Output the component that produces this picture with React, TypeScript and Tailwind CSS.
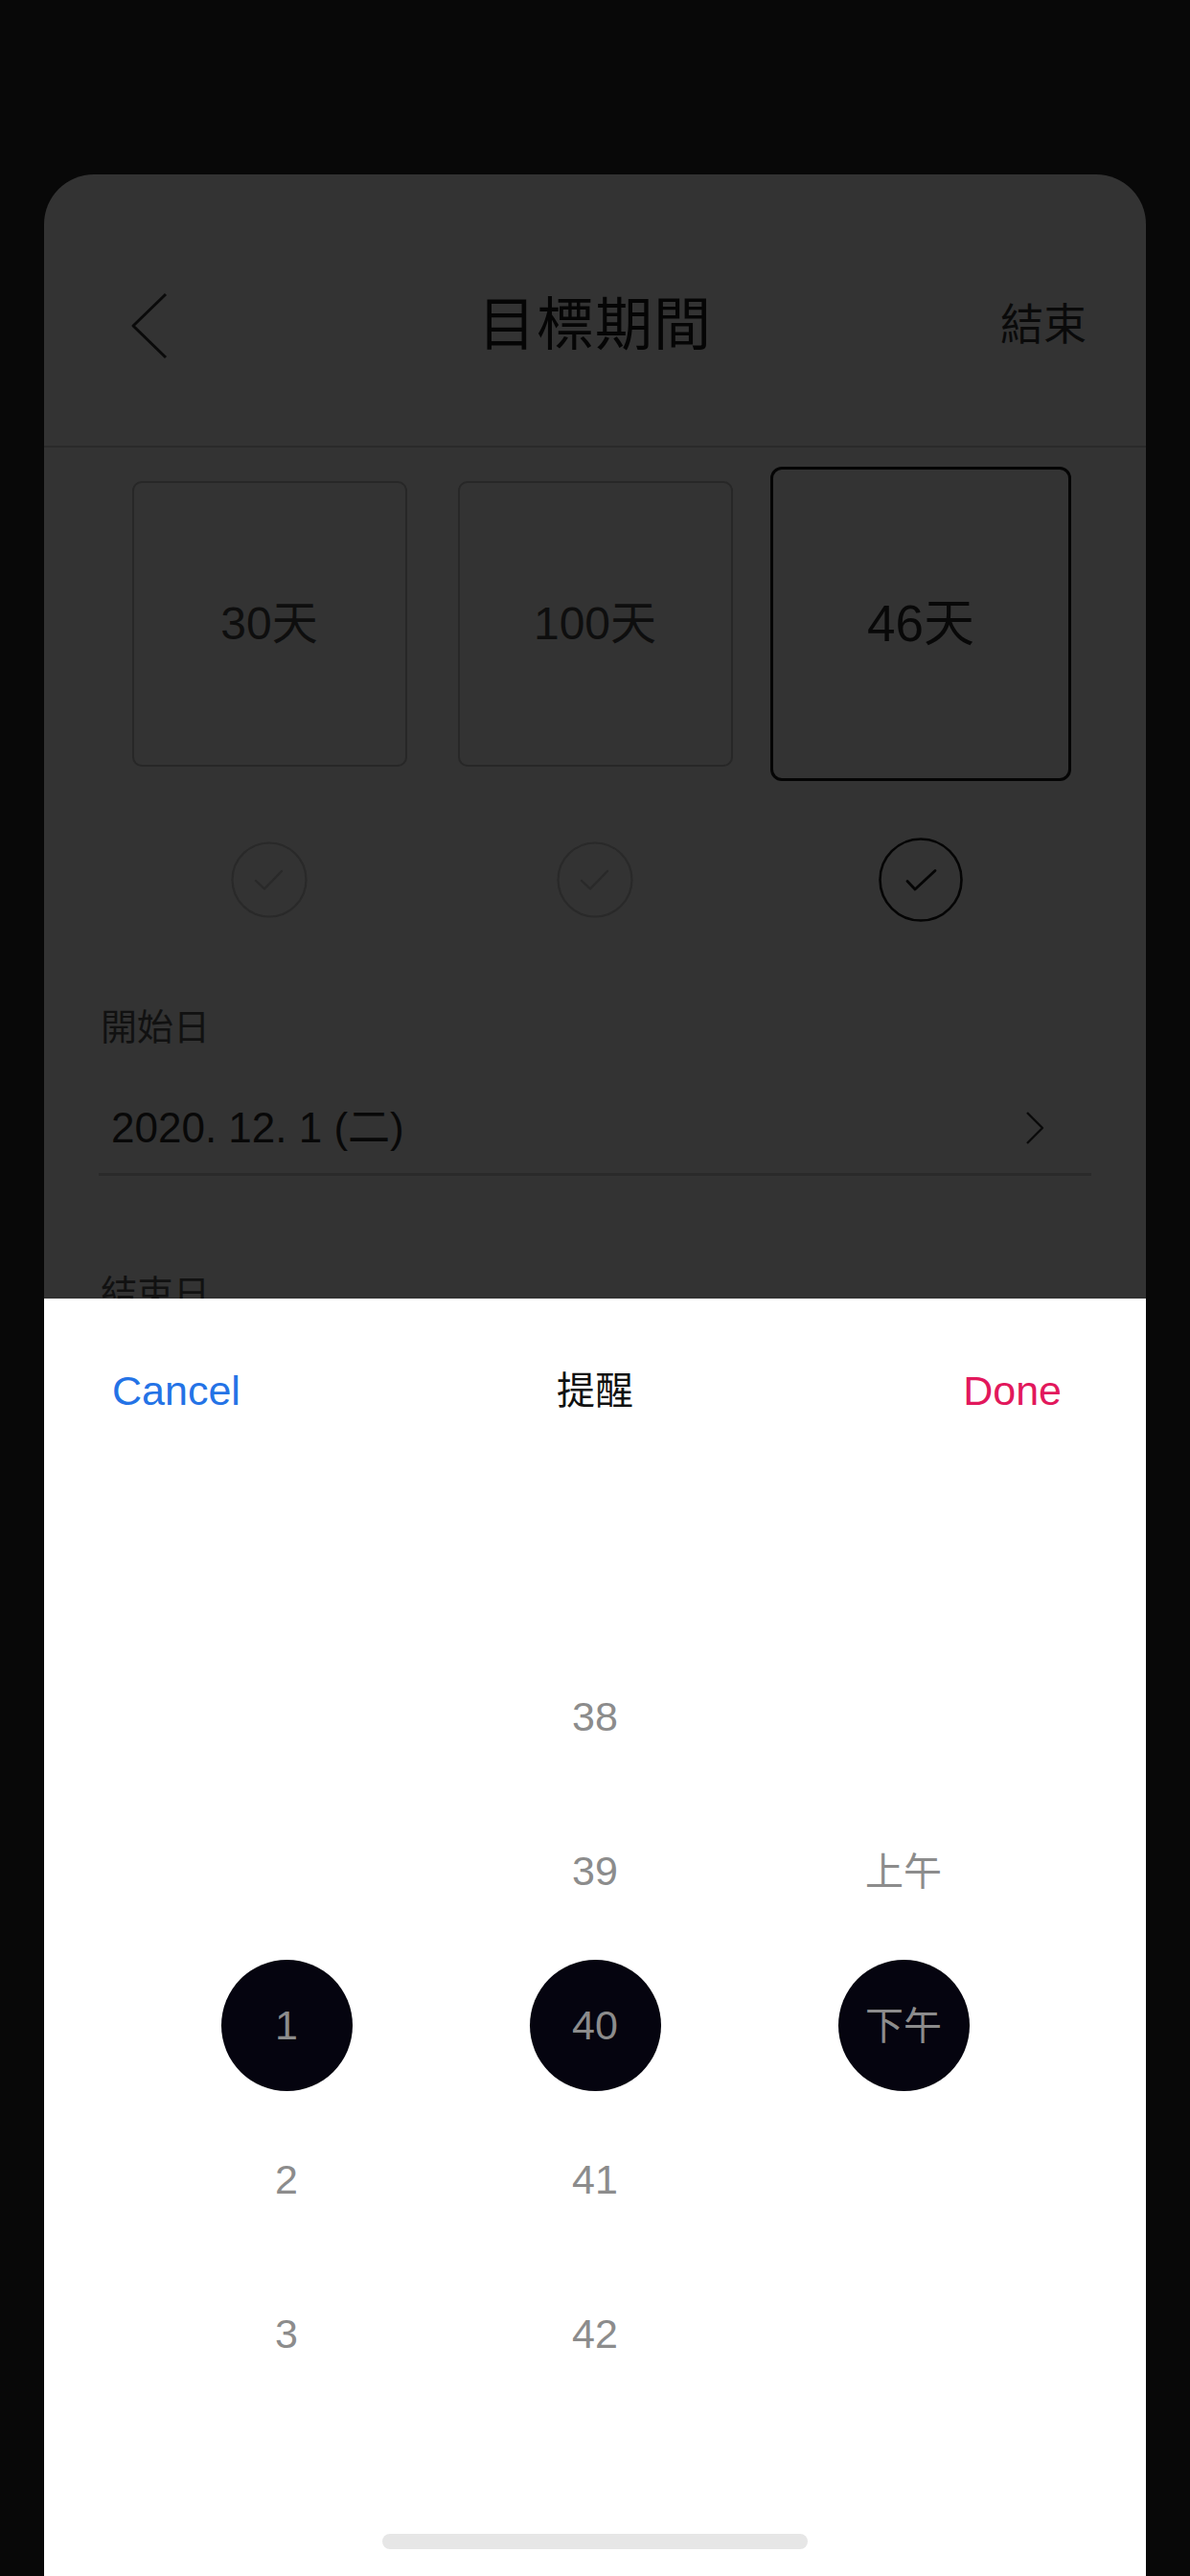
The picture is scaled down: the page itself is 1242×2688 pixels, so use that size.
import React from 'react';

const FONT = { fontFamily: '"Liberation Sans", "Noto Sans CJK TC", sans-serif' };

function CheckCircle({ selected }: { selected: boolean }) {
  if (selected) {
    return (
      <svg width="88" height="88" viewBox="0 0 88 88">
        <circle cx="44" cy="44" r="42.5" fill="none" stroke="#050505" strokeWidth="2.6" />
        <polyline points="30,45.5 38,54 59,34.5" fill="none" stroke="#050505" strokeWidth="2.8" strokeLinecap="round" strokeLinejoin="round" />
      </svg>
    );
  }
  return (
    <svg width="80" height="80" viewBox="0 0 80 80">
      <circle cx="40" cy="40" r="38.5" fill="none" stroke="#292929" strokeWidth="2.2" />
      <polyline points="26,41 35,49.5 53,31" fill="none" stroke="#292929" strokeWidth="2.4" strokeLinecap="round" strokeLinejoin="round" />
    </svg>
  );
}

const periods = [
  { label: '30天', selected: false },
  { label: '100天', selected: false },
  { label: '46天', selected: true },
];

const columns: (string | null)[][] = [
  [null, null, '1', '2', '3'],
  ['38', '39', '40', '41', '42'],
  [null, '上午', '下午', null, null],
];

export default function App() {
  return (
    <div className="w-[1242px] h-[2688px] bg-[#080808] pt-[182px] px-[46px] overflow-hidden" style={FONT}>
      <div className="flex flex-col rounded-t-[52px] overflow-hidden">
        {/* dimmed page behind the sheet */}
        <div className="h-[1173px] bg-[#333333] overflow-hidden">
          <div className="h-[285px] pt-[32px] grid grid-cols-[1fr_auto_1fr] items-center border-b-2 border-[#2a2a2a]">
            <div className="pl-[90px]">
              <svg width="40" height="70" viewBox="0 0 40 70">
                <polyline points="37,2 3,35 37,68" fill="none" stroke="#0a0a0a" strokeWidth="3" strokeLinejoin="round" />
              </svg>
            </div>
            <div className="text-[60px] leading-none text-[#050505] tracking-[1px]">目標期間</div>
            <div className="flex justify-end pr-[62px] text-[45px] leading-none text-[#0a0a0a]">結束</div>
          </div>

          <div className="mt-[20px] h-[328px] px-[65px] grid grid-cols-3 items-center">
            {periods.map((p) => (
              <div key={p.label} className="flex justify-center">
                {p.selected ? (
                  <div className="w-[314px] h-[328px] rounded-[12px] border-[3px] border-[#050505] flex items-center justify-center text-[53px] text-[#080808]">
                    {p.label}
                  </div>
                ) : (
                  <div className="w-[287px] h-[298px] rounded-[10px] border-2 border-[#272727] flex items-center justify-center text-[48px] text-[#0e0e0e]">
                    {p.label}
                  </div>
                )}
              </div>
            ))}
          </div>

          <div className="mt-[59px] h-[88px] px-[65px] grid grid-cols-3 items-center">
            {periods.map((p) => (
              <div key={p.label} className="flex justify-center">
                <CheckCircle selected={p.selected} />
              </div>
            ))}
          </div>

          <div className="mt-[85px] h-[50px] pl-[59px] flex items-center text-[38px] text-[#111111]">開始日</div>

          <div className="mt-[33px] mx-[57px] h-[97px] border-b-[3px] border-[#2a2a2a] pl-[13px] pr-[48px] flex items-center justify-between">
            <span className="text-[44px] text-[#080808]">2020. 12. 1 (二)</span>
            <svg width="22" height="36" viewBox="0 0 22 36">
              <polyline points="3,2 19,18 3,34" fill="none" stroke="#0a0a0a" strokeWidth="2.4" strokeLinejoin="round" />
            </svg>
          </div>

          <div className="mt-[98px] h-[50px] pl-[59px] flex items-center text-[38px] text-[#111111]">結束日</div>
        </div>

        {/* bottom sheet */}
        <div className="h-[1333px] bg-white flex flex-col">
          <div className="h-[192px] grid grid-cols-[1fr_auto_1fr] items-center">
            <div className="pl-[71px] text-[43px] text-[#2473e6]">Cancel</div>
            <div className="text-[40px] text-[#111111]">提醒</div>
            <div className="flex justify-end pr-[88px] text-[43px] text-[#e2185c]">Done</div>
          </div>

          <div className="mt-[164px] px-[92px] grid grid-cols-3">
            {columns.map((col, ci) => (
              <div key={ci} className="flex flex-col">
                {col.map((v, ri) => (
                  <div key={ri} className="h-[161px] flex items-center justify-center">
                    {v === null ? null : ri === 2 ? (
                      <div className={`w-[137px] h-[137px] rounded-full bg-[#05040f] flex items-center justify-center text-[#8c8c8c] ${ci === 2 ? 'text-[40px]' : 'text-[43px]'}`}>
                        {v}
                      </div>
                    ) : (
                      <span className={`text-[#8c8c8c] ${ci === 2 ? 'text-[40px]' : 'text-[43px]'}`}>{v}</span>
                    )}
                  </div>
                ))}
              </div>
            ))}
          </div>

          <div className="mt-[128px] mx-auto w-[444px] h-[16px] rounded-full bg-[#e6e6e6]" />
        </div>
      </div>
    </div>
  );
}
